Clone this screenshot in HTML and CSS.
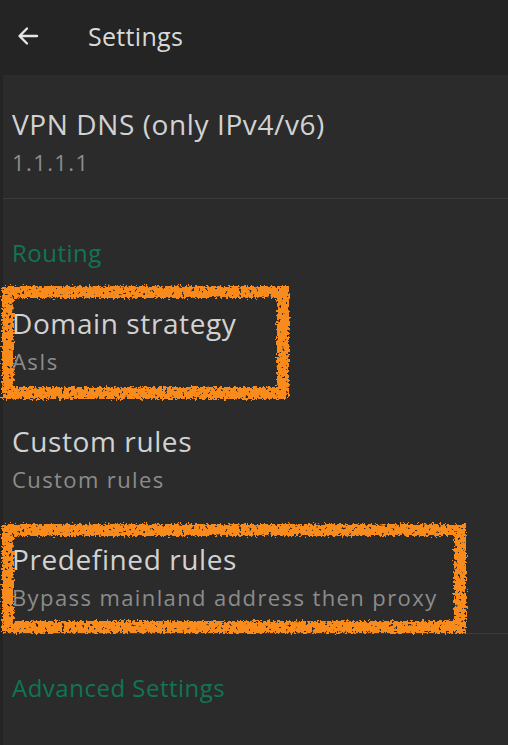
FILE: index.html
```html
<!DOCTYPE html>
<html>
<head>
    <title>Settings</title>
    <link rel="stylesheet" href="styles.css">
</head>
<body>
    <!-- Rough marker filter for the highlight boxes -->
    <svg class="defs" width="0" height="0">
        <filter id="rough" x="-10%" y="-10%" width="120%" height="120%">
            <feTurbulence type="fractalNoise" baseFrequency="0.45" numOctaves="2" seed="3" result="noise"/>
            <feDisplacementMap in="SourceGraphic" in2="noise" scale="7" xChannelSelector="R" yChannelSelector="G" result="disp"/>
            <feTurbulence type="fractalNoise" baseFrequency="0.3" numOctaves="2" seed="9" result="grain"/>
            <feColorMatrix in="grain" type="matrix" values="0 0 0 0 0  0 0 0 0 0  0 0 0 0 0  -16 0 0 0 11.6" result="holes"/>
            <feComposite in="disp" in2="holes" operator="in"/>
        </filter>
    </svg>

    <!-- Toolbar -->
    <div class="toolbar">
        <svg class="back" width="24" height="24" viewBox="0 0 24 24">
            <path d="M21 12H4M11 4.5 3.5 12 11 19.5" fill="none" stroke="#e6e6e6" stroke-width="2.4" stroke-linecap="round" stroke-linejoin="round"/>
        </svg>
        <span class="toolbar-title">Settings</span>
    </div>

    <!-- Preference list -->
    <div class="prefs">
        <div class="item">
            <div class="item-title">VPN DNS (only IPv4/v6)</div>
            <div class="item-summary">1.1.1.1</div>
        </div>
        <div class="divider"></div>

        <div class="category">Routing</div>
        <div class="item">
            <div class="item-title">Domain strategy</div>
            <div class="item-summary">AsIs</div>
            <div class="mark mark-one"></div>
        </div>
        <div class="item">
            <div class="item-title">Custom rules</div>
            <div class="item-summary">Custom rules</div>
        </div>
        <div class="item">
            <div class="item-title">Predefined rules</div>
            <div class="item-summary">Bypass mainland address then proxy</div>
            <div class="mark mark-two"></div>
        </div>
        <div class="divider"></div>

        <div class="category">Advanced Settings</div>
        <div class="item">
            <div class="item-title">Sniffing Settings</div>
        </div>
    </div>
</body>
</html>
```

FILE: styles.css
```css
/* Global */
body {
    margin: 0;
    background-color: #2b2b2b;
    font-family: "Open Sans", sans-serif;
    overflow: hidden;
}

.defs {
    position: absolute;
}

/* Toolbar */
.toolbar {
    height: 75px;
    background-color: #242424;
    display: flex;
    align-items: center;
    padding-left: 16px;
}

.back {
    margin-right: 48px;
    margin-top: -4px;
}

.toolbar-title {
    color: #d9d9d9;
    font-size: 25px;
    letter-spacing: 0.3px;
    margin-top: -3px;
}

/* List */
.prefs {
    border-left: 3px solid #242424;
    padding-top: 5px;
}

.item {
    position: relative;
    padding: 26px 9px 16px;
}

.item-title {
    color: #d2d2d2;
    font-size: 28px;
    line-height: 36px;
    letter-spacing: 0.6px;
    white-space: nowrap;
}

.item-summary {
    color: #8c8c8c;
    font-size: 22px;
    line-height: 40px;
    letter-spacing: 1.4px;
    white-space: nowrap;
}

.divider {
    height: 1px;
    background-color: #3b3b3b;
}

.category {
    color: #0f7556;
    font-size: 24px;
    line-height: 30px;
    letter-spacing: 0.5px;
    padding: 39px 9px 11px;
}

/* Orange highlight boxes */
.mark {
    position: absolute;
    left: -1px;
    border: 12px solid #f98a1f;
    filter: url(#rough);
}

.mark-one {
    top: 7px;
    width: 263px;
    height: 89px;
}

.mark-two {
    top: 9px;
    width: 440px;
    height: 85px;
}
```
